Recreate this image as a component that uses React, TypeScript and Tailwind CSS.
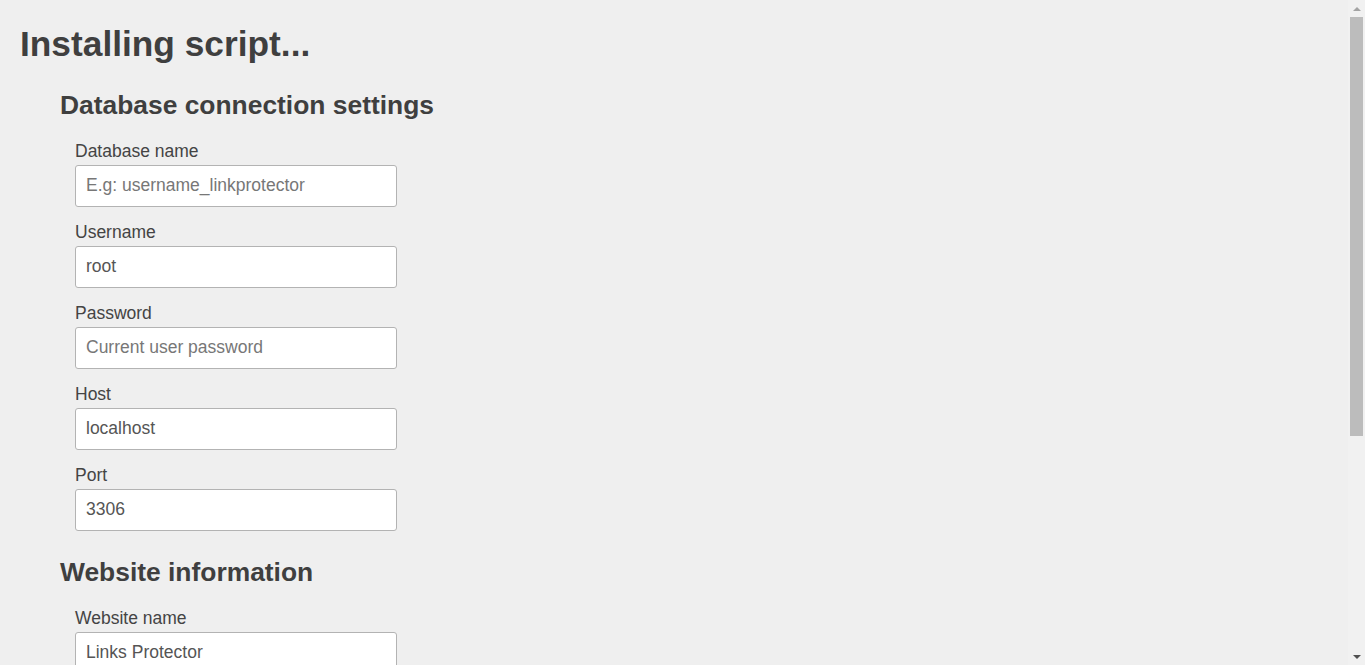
type Field = {
  label: string;
  value?: string;
  placeholder?: string;
};

const dbFields: Field[] = [
  { label: "Database name", placeholder: "E.g: username_linkprotector" },
  { label: "Username", value: "root" },
  { label: "Password", placeholder: "Current user password" },
  { label: "Host", value: "localhost" },
  { label: "Port", value: "3306" },
];

const siteFields: Field[] = [{ label: "Website name", value: "Links Protector" }];

function FormField({ label, value, placeholder }: Field) {
  return (
    <div className="mb-[15px]">
      <label className="block h-[19px] pt-[1px] text-[17.5px] leading-[19px] text-[#444]">
        {label}
      </label>
      <input
        type="text"
        readOnly
        defaultValue={value}
        placeholder={placeholder}
        className="mt-[5px] block h-[42px] w-[322px] rounded-[3px] border border-[#b3b3b3] bg-white px-[10px] pb-[1px] text-[17.5px] text-[#555] outline-none placeholder:text-[#777]"
      />
    </div>
  );
}

function Scrollbar() {
  return (
    <div className="flex w-[17px] shrink-0 flex-col bg-[#f1f1f1]">
      <div className="flex h-[17px] items-center justify-center">
        <div className="h-0 w-0 border-x-[4px] border-b-[4px] border-x-transparent border-b-[#a3a3a3]" />
      </div>
      <div className="mx-[2px] h-[419px] bg-[#bcbcbc]" />
      <div className="flex-1" />
      <div className="flex h-[17px] items-center justify-center">
        <div className="h-0 w-0 border-x-[4px] border-t-[4px] border-x-transparent border-t-[#505050]" />
      </div>
    </div>
  );
}

export default function App() {
  return (
    <div
      className="flex h-[665px] overflow-hidden bg-[#efefef] text-[#444]"
      style={{ fontFamily: '"Liberation Sans", Arial, sans-serif' }}
    >
      <main className="flex-1 pl-[20px] pt-[24px]">
        <h1 className="text-[35.3px] font-bold leading-[40px] text-[#3f3f3f]">
          Installing script...
        </h1>

        <section className="pl-[40px]">
          <h2 className="mt-[26px] text-[26.4px] font-bold leading-[30px] text-[#3f3f3f]">
            Database connection settings
          </h2>
          <div className="mt-[21px] pl-[15px]">
            {dbFields.map((f) => (
              <FormField key={f.label} {...f} />
            ))}
          </div>

          <h2 className="mt-[26px] text-[26.4px] font-bold leading-[30px] text-[#3f3f3f]">
            Website information
          </h2>
          <div className="mt-[21px] pl-[15px]">
            {siteFields.map((f) => (
              <FormField key={f.label} {...f} />
            ))}
          </div>
        </section>
      </main>
      <Scrollbar />
    </div>
  );
}
